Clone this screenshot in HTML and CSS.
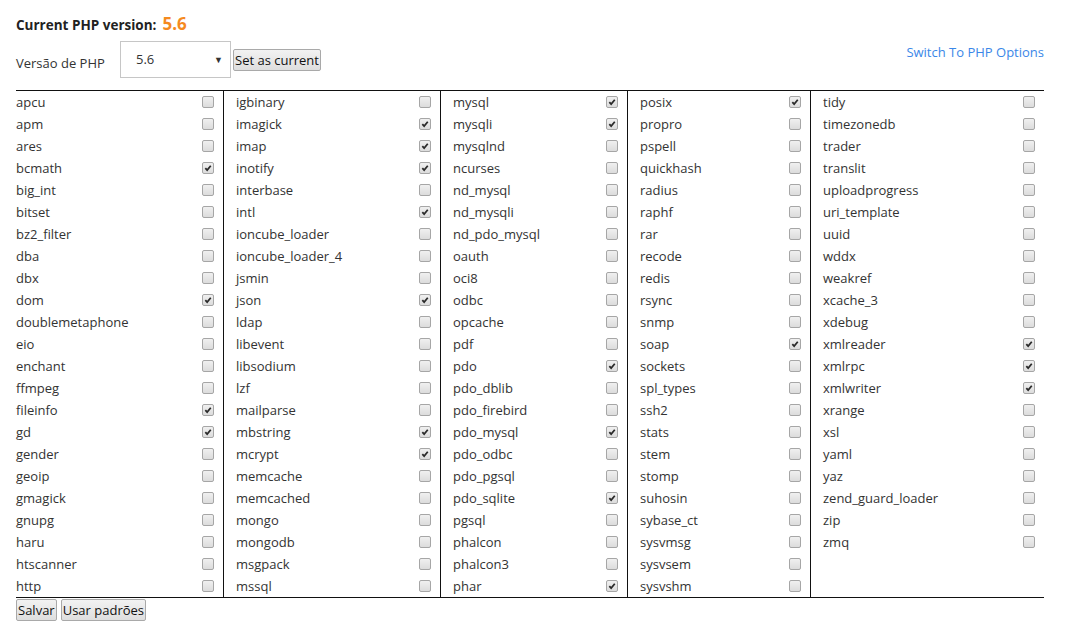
FILE: index.html
```html
<!DOCTYPE html>
<html lang="pt">
<head>
<meta charset="utf-8">
<title>PHP Selector</title>
<link rel="stylesheet" href="styles.css">
</head>
<body>
<div class="page">
  <div class="current">
    <span class="current-label">Current PHP version:</span>
    <span class="current-value">5.6</span>
  </div>
  <div class="toolbar">
    <div class="version-form">
      <span class="version-label">Versão de PHP</span>
      <div class="select">
        <span class="select-value">5.6</span>
        <span class="select-arrow">▼</span>
      </div>
      <button class="btn">Set as current</button>
    </div>
    <a class="switch-link" href="#">Switch To PHP Options</a>
  </div>
  <div class="ext-grid" id="grid"></div>
  <div class="actions">
    <button class="btn">Salvar</button>
    <button class="btn">Usar padrões</button>
  </div>
</div>
<script src="app.js"></script>
</body>
</html>
```

FILE: app.js
```js
var cols = [
  [["apcu",0],["apm",0],["ares",0],["bcmath",1],["big_int",0],["bitset",0],["bz2_filter",0],["dba",0],["dbx",0],["dom",1],["doublemetaphone",0],["eio",0],["enchant",0],["ffmpeg",0],["fileinfo",1],["gd",1],["gender",0],["geoip",0],["gmagick",0],["gnupg",0],["haru",0],["htscanner",0],["http",0]],
  [["igbinary",0],["imagick",1],["imap",1],["inotify",1],["interbase",0],["intl",1],["ioncube_loader",0],["ioncube_loader_4",0],["jsmin",0],["json",1],["ldap",0],["libevent",0],["libsodium",0],["lzf",0],["mailparse",0],["mbstring",1],["mcrypt",1],["memcache",0],["memcached",0],["mongo",0],["mongodb",0],["msgpack",0],["mssql",0]],
  [["mysql",1],["mysqli",1],["mysqlnd",0],["ncurses",0],["nd_mysql",0],["nd_mysqli",0],["nd_pdo_mysql",0],["oauth",0],["oci8",0],["odbc",0],["opcache",0],["pdf",0],["pdo",1],["pdo_dblib",0],["pdo_firebird",0],["pdo_mysql",1],["pdo_odbc",0],["pdo_pgsql",0],["pdo_sqlite",1],["pgsql",0],["phalcon",0],["phalcon3",0],["phar",1]],
  [["posix",1],["propro",0],["pspell",0],["quickhash",0],["radius",0],["raphf",0],["rar",0],["recode",0],["redis",0],["rsync",0],["snmp",0],["soap",1],["sockets",0],["spl_types",0],["ssh2",0],["stats",0],["stem",0],["stomp",0],["suhosin",0],["sybase_ct",0],["sysvmsg",0],["sysvsem",0],["sysvshm",0]],
  [["tidy",0],["timezonedb",0],["trader",0],["translit",0],["uploadprogress",0],["uri_template",0],["uuid",0],["wddx",0],["weakref",0],["xcache_3",0],["xdebug",0],["xmlreader",1],["xmlrpc",1],["xmlwriter",1],["xrange",0],["xsl",0],["yaml",0],["yaz",0],["zend_guard_loader",0],["zip",0],["zmq",0]]
];
var grid = document.getElementById("grid");
var check = '<svg viewBox="0 0 12 12" width="12" height="12"><path d="M2.8 6.1 L5 8.5 L9.3 3.3" fill="none" stroke="#2a2a2a" stroke-width="2.1"/></svg>';
cols.forEach(function (col) {
  var c = document.createElement("div");
  c.className = "ext-col";
  col.forEach(function (item) {
    var r = document.createElement("div");
    r.className = "ext-row";
    r.innerHTML = '<span class="ext-name">' + item[0] + '</span><span class="cb' + (item[1] ? ' cb-on' : '') + '">' + (item[1] ? check : '') + '</span>';
    c.appendChild(r);
  });
  grid.appendChild(c);
});
```

FILE: styles.css
```css
html, body {
  margin: 0;
  padding: 0;
  background: #fff;
}
body {
  font-family: "Open Sans", "Noto Sans", sans-serif;
  font-size: 13px;
  color: #333;
}
.page {
  width: 1028px;
  padding: 12px 0 0 16px;
}
.current {
  height: 26px;
  display: flex;
  align-items: baseline;
}
.current-label {
  font-weight: 700;
  font-size: 13.5px;
  color: #222;
}
.current-value {
  font-weight: 700;
  font-size: 17px;
  color: #f58a1f;
  margin-left: 6px;
}
.toolbar {
  display: flex;
  justify-content: space-between;
  align-items: flex-start;
  height: 49px;
  margin-top: 3px;
}
.version-form {
  display: flex;
  align-items: center;
  height: 37px;
}
.version-label {
  width: 104px;
  margin-top: 6px;
}
.select {
  box-sizing: border-box;
  width: 111px;
  height: 37px;
  border: 1px solid #c6c6c6;
  display: flex;
  align-items: center;
  justify-content: space-between;
  padding: 0 7px 0 15px;
}
.select-value {
  font-size: 13px;
  color: #333;
  margin-top: -2px;
}
.select-arrow {
  font-size: 9px;
  color: #333;
}
.btn {
  font-family: "Open Sans", "Noto Sans", sans-serif;
  font-size: 13px;
  color: #111;
  background: linear-gradient(#f2f2f2, #dedede);
  border: 1px solid #a9a9a9;
  border-radius: 2px;
  height: 22px;
  padding: 0 1px;
  line-height: 18px;
  margin-left: 2px;
}
.version-form .btn {
  margin-top: 1px;
}
.switch-link {
  color: #3a87e8;
  text-decoration: none;
  font-size: 13px;
  margin-top: 2px;
}
.ext-grid {
  display: grid;
  grid-template-columns: 207px 217px 187px 183px 234px;
  border-top: 1px solid #111;
  border-bottom: 1px solid #111;
}
.ext-col {
  box-sizing: border-box;
  padding: 0 9px 0 12px;
}
.ext-col:first-child {
  padding-left: 0;
}
.ext-col + .ext-col {
  border-left: 1px solid #111;
}
.ext-row {
  height: 22px;
  display: flex;
  align-items: center;
  justify-content: space-between;
}
.ext-name {
  margin-top: -1px;
}
.cb {
  box-sizing: border-box;
  width: 12px;
  height: 12px;
  border: 1px solid #a6a6a6;
  border-radius: 2px;
  background: linear-gradient(#f0f0f0, #dcdcdc);
  display: flex;
  align-items: center;
  justify-content: center;
}
.cb svg {
  display: block;
}
.actions {
  display: flex;
  margin-top: 1px;
}
.actions .btn {
  margin-left: 0;
  margin-right: 4px;
}
```
